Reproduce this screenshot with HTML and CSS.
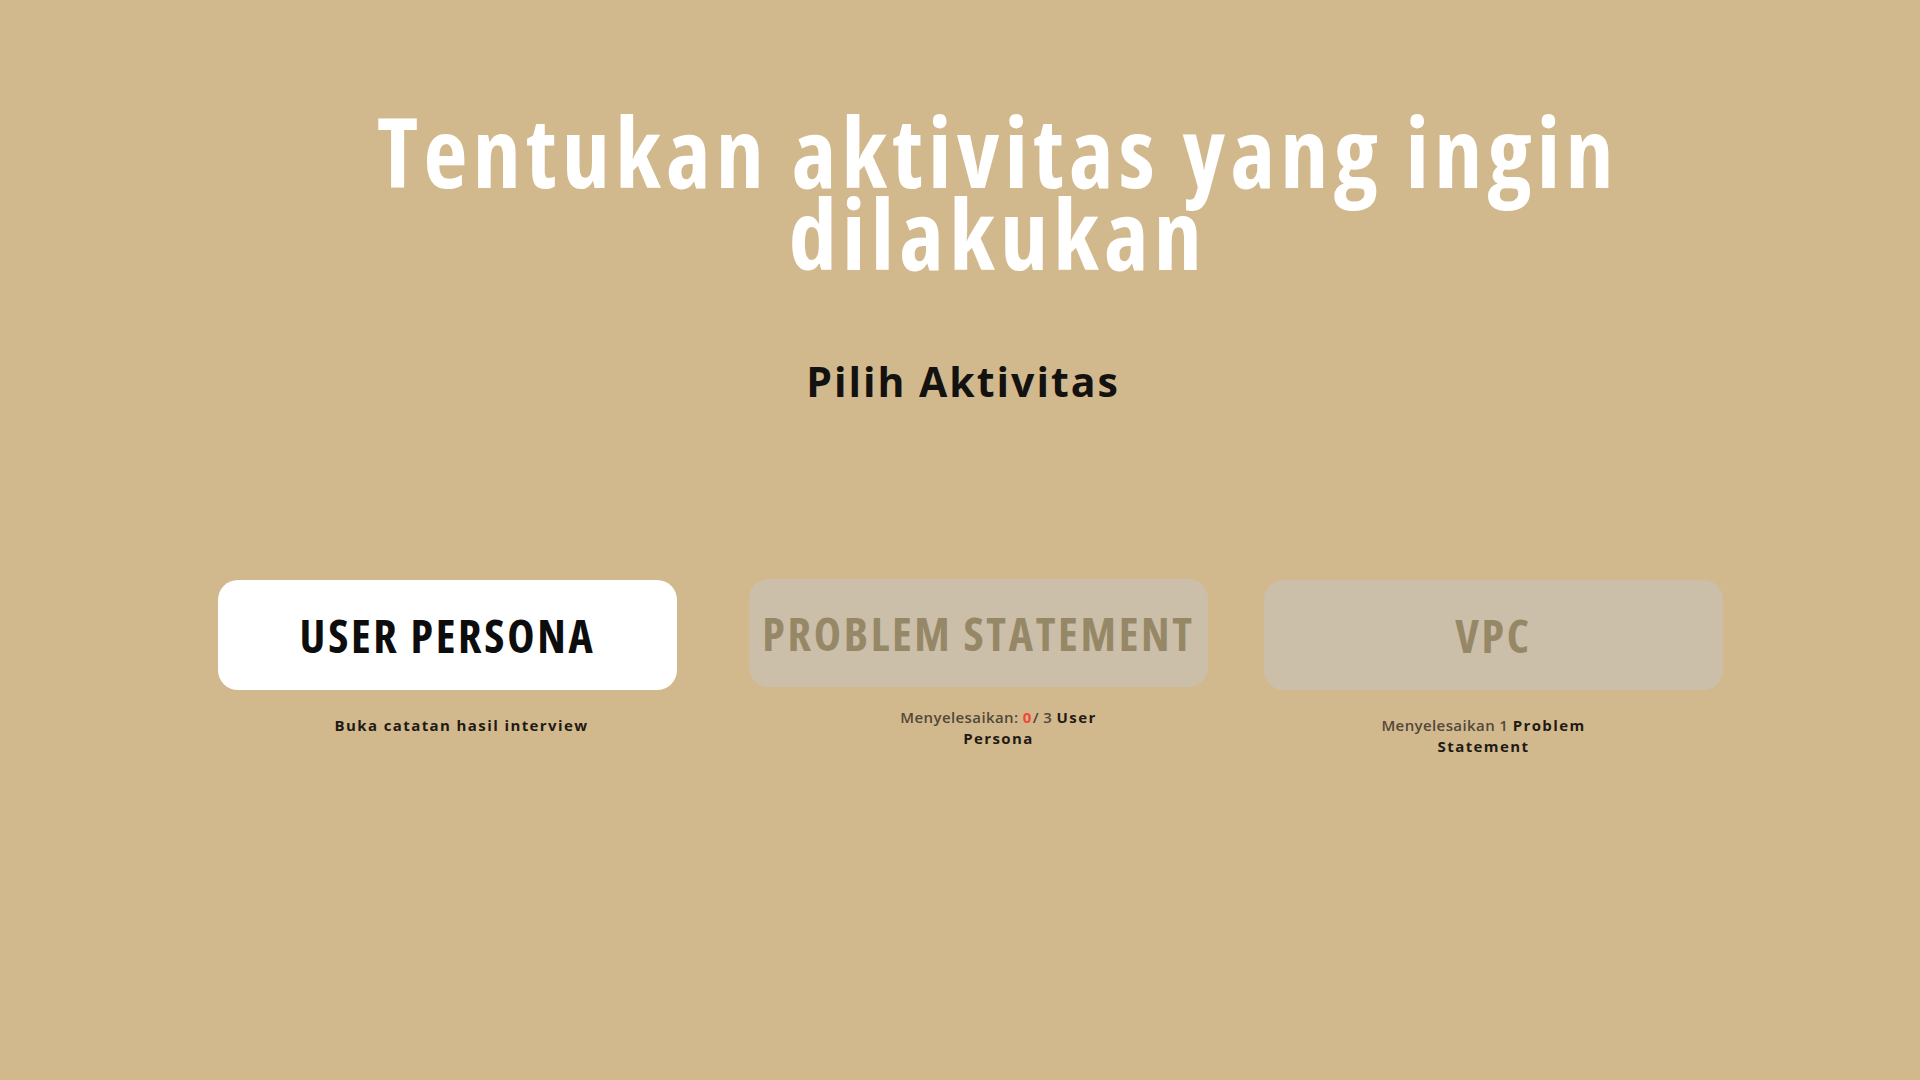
FILE: index.html
```html
<!DOCTYPE html>
<html lang="id">
<head>
<meta charset="utf-8">
<title>Pilih Aktivitas</title>
<link rel="stylesheet" href="styles.css">
</head>
<body>
<main class="page">
  <h1 class="title">Tentukan aktivitas yang ingin<br>dilakukan</h1>
  <h2 class="subtitle">Pilih Aktivitas</h2>
  <section class="activities">
    <div class="activity">
      <button class="card card-active">USER PERSONA</button>
      <p class="caption caption-1"><span class="dark">Buka catatan hasil interview</span></p>
    </div>
    <div class="activity activity-2">
      <button class="card card-locked card-2">PROBLEM STATEMENT</button>
      <p class="caption caption-2"><span class="muted">Menyelesaikan: </span><span class="red">0</span><span class="muted">/ 3 </span><span class="dark">User Persona</span></p>
    </div>
    <div class="activity">
      <button class="card card-locked">VPC</button>
      <p class="caption caption-3"><span class="muted">Menyelesaikan 1 </span><span class="dark">Problem Statement</span></p>
    </div>
  </section>
</main>
</body>
</html>
```
FILE: styles.css
```css
html, body {
  margin: 0;
  padding: 0;
  background: #d2b98d;
}
body {
  width: 1920px;
  height: 1080px;
  overflow: hidden;
  font-family: "Open Sans", "Noto Sans", sans-serif;
}
.page {
  display: flex;
  flex-direction: column;
  align-items: center;
}
.title {
  margin: 110px 0 0 76px;
  font-size: 96px;
  line-height: 82px;
  font-weight: 700;
  font-stretch: 75%;
  color: #ffffff;
  text-align: center;
  letter-spacing: 5.3px;
}
.subtitle {
  margin: 80px 0 0 6px;
  font-size: 41px;
  font-weight: 700;
  color: #141210;
  line-height: 54px;
  letter-spacing: 2px;
}
.activities {
  display: flex;
  gap: 64px;
  margin-top: 172px;
  padding-left: 21px;
}
.activity {
  width: 459px;
  display: flex;
  flex-direction: column;
  align-items: center;
}
.activity-2 {
  margin-left: 8px;
  margin-right: -8px;
}
.card {
  width: 459px;
  height: 110px;
  border: none;
  border-radius: 20px;
  font-family: "Open Sans", "Noto Sans", sans-serif;
  font-size: 46px;
  font-weight: 700;
  font-stretch: 75%;
  letter-spacing: 2.7px;
  padding: 0;
  cursor: pointer;
}
.card-active {
  background: #ffffff;
  color: #0d0d0d;
}
.card-locked {
  background: #cbbfaa;
  color: #968867;
}
.card-2 {
  height: 108px;
  margin-top: -1px;
}
.caption {
  width: 260px;
  margin: 25px 0 0;
  font-size: 15px;
  line-height: 21px;
  font-weight: 700;
  letter-spacing: 1.4px;
  text-align: center;
}
.caption-1 { margin-left: 28px; }
.caption-2 { margin-top: 20px; margin-left: 40px; }
.caption-3 { margin-left: -20px; }
.muted { color: #51483a; font-weight: 600; letter-spacing: 0.4px; }
.dark { color: #1f1b14; }
.red { color: #ee4b36; }
```
